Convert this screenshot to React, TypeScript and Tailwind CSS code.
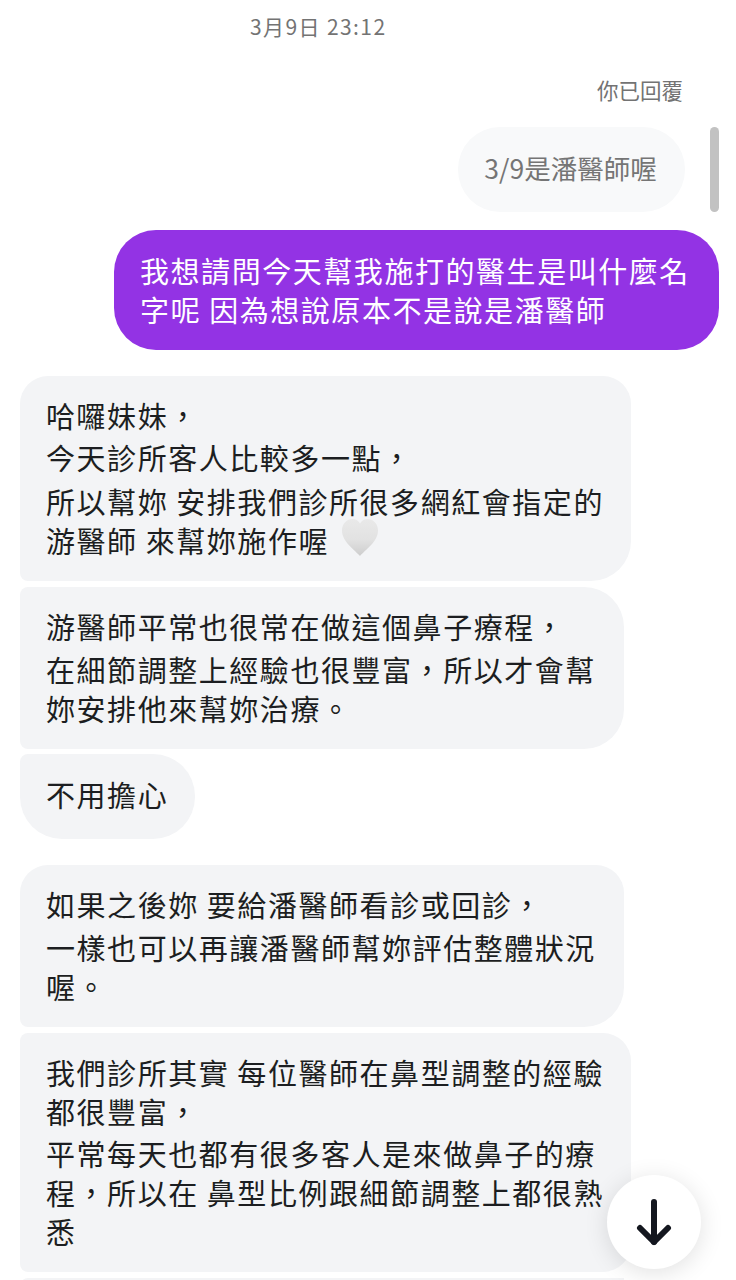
const font = { fontFamily: '"Noto Sans CJK TC", "Noto Sans CJK SC", sans-serif' }

function Heart() {
  return (
    <svg width="38" height="40" viewBox="0 0 38 40" className="mb-[5px] ml-[12px] shrink-0">
      <defs>
        <linearGradient id="heart" x1="0" y1="0" x2="0" y2="1">
          <stop offset="0" stopColor="#e9e9e9" />
          <stop offset="0.55" stopColor="#e2e2e2" />
          <stop offset="1" stopColor="#cdcdcd" />
        </linearGradient>
      </defs>
      <path
        d="M19 38C14 32 1 24 1 12.500C1 5.500 6 1 11.500 1C15 1 17.500 3 19 5.500C20.500 3 23 1 26.500 1C32 1 37 5.500 37 12.500C37 24 24 32 19 38Z"
        fill="url(#heart)"
      />
    </svg>
  )
}

export default function App() {
  return (
    <div className="relative h-[1280px] w-[736px] overflow-hidden bg-white" style={font}>
      {/* header */}
      <div className="pl-[250px] pt-[11px] text-[21px] leading-[30px] tracking-[1.4px] text-[#737373]">3月9日 23:12</div>
      <div className="mt-[34px] pr-[53px] text-right text-[21.5px] leading-[30px] text-[#737373]">你已回覆</div>

      {/* outgoing */}
      <div className="mt-[22px] flex flex-col items-end">
        <div className="mr-[51px] flex h-[85px] w-[227px] items-center justify-center rounded-[42px] bg-[#f8f9fa] pb-[4px] pr-[2px] text-[26.500px] text-[#757575]">
          3/9是潘醫師喔
        </div>
        <div className="mr-[17px] mt-[18px] flex h-[120px] w-[605px] flex-col justify-center rounded-[42px] bg-[#9333e4] pl-[26px] text-[29px] leading-[39px] tracking-[1.550px] text-white">
          <div className="whitespace-nowrap">我想請問今天幫我施打的醫生是叫什麼名</div>
          <div className="whitespace-nowrap">字呢 因為想說原本不是說是潘醫師</div>
        </div>
      </div>

      {/* incoming */}
      <div className="ml-[20px] mt-[26px] flex flex-col items-start text-[29px] leading-[39px] tracking-[1.550px] text-[#1c1e21]">
        <div className="h-[205px] w-[611px] rounded-t-[28px] rounded-bl-[8px] rounded-br-[40px] bg-[#f3f4f6] pl-[26px] pt-[20px]">
          <div className="whitespace-nowrap">哈囉妹妹，</div>
          <div className="mt-[3px] whitespace-nowrap">今天診所客人比較多一點，</div>
          <div className="mt-[5px] whitespace-nowrap">所以幫妳 安排我們診所很多網紅會指定的</div>
          <div className="flex h-[39px] items-center whitespace-nowrap">
            游醫師 來幫妳施作喔
            <Heart />
          </div>
        </div>
        <div className="mt-[6px] h-[162px] w-[604px] rounded-l-[8px] rounded-r-[40px] bg-[#f3f4f6] pl-[26px] pt-[20px]">
          <div className="whitespace-nowrap">游醫師平常也很常在做這個鼻子療程，</div>
          <div className="mt-[4px] whitespace-nowrap">在細節調整上經驗也很豐富，所以才會幫</div>
          <div className="whitespace-nowrap">妳安排他來幫妳治療。</div>
        </div>
        <div className="mt-[5px] flex h-[85px] w-[175px] items-center rounded-tl-[8px] rounded-bl-[42px] rounded-r-[42px] bg-[#f3f4f6] pb-[4px] pl-[26px]">
          不用擔心
        </div>
        <div className="mt-[26px] h-[162px] w-[604px] rounded-t-[28px] rounded-bl-[8px] rounded-br-[40px] bg-[#f3f4f6] pl-[26px] pt-[20px]">
          <div className="whitespace-nowrap">如果之後妳 要給潘醫師看診或回診，</div>
          <div className="mt-[4px] whitespace-nowrap">一樣也可以再讓潘醫師幫妳評估整體狀況</div>
          <div className="whitespace-nowrap">喔。</div>
        </div>
        <div className="mt-[6px] h-[239px] w-[611px] rounded-l-[8px] rounded-r-[28px] bg-[#f3f4f6] pl-[26px] pt-[20px]">
          <div className="whitespace-nowrap">我們診所其實 每位醫師在鼻型調整的經驗</div>
          <div className="whitespace-nowrap">都很豐富，</div>
          <div className="mt-[3px] whitespace-nowrap">平常每天也都有很多客人是來做鼻子的療</div>
          <div className="whitespace-nowrap">程，所以在 鼻型比例跟細節調整上都很熟</div>
          <div className="whitespace-nowrap">悉</div>
        </div>
        <div className="mt-[6px] h-[40px] w-[604px] rounded-l-[8px] bg-[#f3f4f6]" />
      </div>

      {/* scrollbar */}
      <div className="absolute left-[710px] top-[127px] h-[85px] w-[9px] rounded-full bg-[#c2c2c2]" />

      {/* scroll to bottom */}
      <div className="absolute left-[607px] top-[1175px] flex h-[94px] w-[94px] items-center justify-center rounded-full bg-white shadow-[0_4px_24px_rgba(0,0,0,0.12)]">
        <svg width="36" height="48" viewBox="0 0 36 48" fill="none" stroke="#14171f" strokeWidth="6" strokeLinecap="round" strokeLinejoin="round">
          <path d="M18 4V44" />
          <path d="M4 30L18 44L32 30" />
        </svg>
      </div>
    </div>
  )
}
